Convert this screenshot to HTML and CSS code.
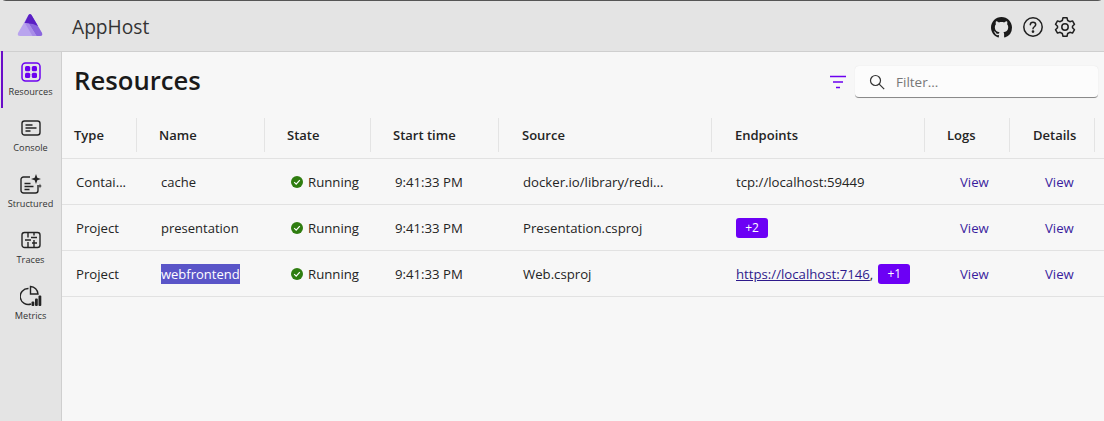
FILE: index.html
```html
<!DOCTYPE html>
<html lang="en">
<head>
    <meta charset="UTF-8">
    <title>AppHost</title>
    <link rel="stylesheet" href="styles.css">
</head>
<body>
    <div class="app">
        <header class="top">
            <div class="logo">
                <svg width="26" height="24" viewBox="0 0 26 24">
                    <path d="M11.500 2 Q13 0 14.500 2 L25 20 Q26 23 23 23 L3 23 Q0 23 1 20 Z" fill="#b9a4ee"/>
                    <path d="M14 1.500 L25 20 Q26 23 23 23 L19.500 23 L12 11 Z" fill="#8a66dd"/>
                    <path d="M8.500 11 L12 11 L19.500 23 L15.500 23 Z" fill="#a88ce8"/>
                    <path d="M11.500 2 Q13 0 14.500 2 L21 13 L16 11 L7.500 10 Z" fill="#5a1fc4"/>
                </svg>
            </div>
            <div class="app-name">AppHost</div>
            <div class="top-icons">
                <svg width="21" height="21" viewBox="0 0 16 16"><path fill="#1a1a1a" d="M8 0C3.580 0 0 3.580 0 8c0 3.540 2.290 6.530 5.470 7.590.4.070.55-.17.55-.38 0-.19-.01-.82-.01-1.490-2.010.37-2.530-.49-2.690-.94-.09-.23-.48-.94-.82-1.130-.28-.15-.68-.52-.01-.53.630-.01 1.080.58 1.230.82.720 1.210 1.870.87 2.330.66.070-.52.280-.87.510-1.070-1.780-.2-3.640-.89-3.640-3.950 0-.87.310-1.590.820-2.150-.08-.2-.36-1.020.08-2.120 0 0 .67-.21 2.200.82.640-.18 1.320-.27 2-.27s1.360.09 2 .27c1.530-1.040 2.200-.82 2.200-.82.440 1.100.160 1.920.08 2.120.51.560.82 1.270.82 2.150 0 3.070-1.870 3.750-3.650 3.950.29.250.54.730.54 1.480 0 1.070-.01 1.930-.01 2.200 0 .21.150.46.550.38A8.010 8.010 0 0 0 16 8c0-4.420-3.580-8-8-8z"/></svg>
                <svg width="22" height="22" viewBox="0 0 22 22" fill="none" stroke="#1f1f1f" stroke-width="1.500"><circle cx="11" cy="11" r="9.200"/><path d="M8.300 8.800c0-1.600 1.200-2.600 2.700-2.600s2.700 1 2.700 2.400c0 2.200-2.700 2.100-2.700 4.200" stroke-linecap="round"/><circle cx="11" cy="15.600" r="0.600" fill="#1f1f1f"/></svg>
                <svg width="22" height="22" viewBox="0 0 22 22" fill="none" stroke="#1f1f1f" stroke-width="1.500" stroke-linejoin="round"><path d="M9 1.800 L13 1.800 L13.700 4.500 L15.900 5.700 L18.500 4.900 L20.500 8.300 L18.500 10.200 L18.500 11.800 L20.500 13.700 L18.500 17.100 L15.900 16.300 L13.700 17.500 L13 20.200 L9 20.200 L8.300 17.500 L6.100 16.300 L3.500 17.100 L1.500 13.700 L3.500 11.800 L3.500 10.200 L1.500 8.300 L3.500 4.900 L6.100 5.700 L8.300 4.500 Z"/><circle cx="11" cy="11" r="3.200"/></svg>
            </div>
        </header>
        <div class="body-wrap">
            <nav class="side">
                <div class="nav-item active">
                    <svg width="20" height="20" viewBox="0 0 20 20"><rect x="1" y="1" width="18" height="18" rx="3.500" fill="none" stroke="#6c00f0" stroke-width="1.500"/><rect x="4" y="4" width="5.200" height="5.200" rx="1.500" fill="#6c00f0"/><rect x="10.800" y="4" width="5.200" height="5.200" rx="1.500" fill="#6c00f0"/><rect x="4" y="10.800" width="5.200" height="5.200" rx="1.500" fill="#6c00f0"/><rect x="10.800" y="10.800" width="5.200" height="5.200" rx="1.500" fill="#6c00f0"/></svg>
                    <span>Resources</span>
                </div>
                <div class="nav-item">
                    <svg width="20" height="20" viewBox="0 0 20 20" fill="none" stroke="#242424" stroke-width="1.400"><rect x="1" y="3" width="18" height="14" rx="2.500"/><path d="M4.500 7h7M4.500 10h11M4.500 13h5"/></svg>
                    <span>Console</span>
                </div>
                <div class="nav-item">
                    <svg width="22" height="20" viewBox="0 0 22 20" fill="none" stroke="#242424" stroke-width="1.400"><path d="M10 3H3.500A2.500 2.500 0 0 0 1 5.500V16.500A2.500 2.500 0 0 0 3.500 19H15.500A2.500 2.500 0 0 0 18 16.500V11"/><path d="M4.500 9.500h6M4.500 12.500h9M4.500 15.500h5"/><path d="M16 0 L17.300 3.700 L21 5 L17.300 6.300 L16 10 L14.700 6.300 L11 5 L14.700 3.700 Z" fill="#242424" stroke="none"/><path d="M20 9.500 L20.600 11.400 L22 12 L20.600 12.600 L20 14.500 L19.400 12.600 L18 12 L19.400 11.400 Z" fill="#242424" stroke="none"/></svg>
                    <span>Structured</span>
                </div>
                <div class="nav-item">
                    <svg width="20" height="20" viewBox="0 0 20 20" fill="none" stroke="#242424" stroke-width="1.400"><rect x="1" y="2.500" width="18" height="15" rx="2.500"/><path d="M7 2.500v5M7 12v5.500M13 2.500v3M13 10v7.500M4 10h6M10 7.500h6M11 13h5"/></svg>
                    <span>Traces</span>
                </div>
                <div class="nav-item">
                    <svg width="22" height="22" viewBox="0 0 22 22" fill="none" stroke="#242424" stroke-width="1.400"><path d="M8.500 3.500A8 8 0 1 0 11 19"/><path d="M10.500 1.500A8 8 0 0 1 18 9H10.500Z"/><rect x="11.500" y="16.500" width="2.800" height="4.500" rx="1" fill="#242424" stroke="none"/><rect x="15" y="13.500" width="2.800" height="7.500" rx="1" fill="#242424" stroke="none"/><rect x="18.500" y="10.500" width="2.800" height="10.500" rx="1" fill="#242424" stroke="none"/></svg>
                    <span>Metrics</span>
                </div>
            </nav>
            <main class="main">
                <div class="title-bar">
                    <h1>Resources</h1>
                    <svg class="filter-icon" width="18" height="14" viewBox="0 0 18 14" fill="none" stroke="#6c00f0" stroke-width="1.500"><path d="M1 1.500h16M4 7h10M7 12.500h4"/></svg>
                    <div class="search">
                        <svg width="16" height="16" viewBox="0 0 16 16" fill="none" stroke="#333" stroke-width="1.200"><circle cx="6.500" cy="6.500" r="5"/><path d="M10.200 10.200l5 5"/></svg>
                        <span>Filter...</span>
                    </div>
                </div>
                <div class="row head">
                    <div class="h-cell">Type</div>
                    <div class="h-cell">Name</div>
                    <div class="h-cell">State</div>
                    <div class="h-cell">Start time</div>
                    <div class="h-cell wide">Source</div>
                    <div class="h-cell wide">Endpoints</div>
                    <div class="h-cell">Logs</div>
                    <div class="h-cell">Details</div>
                </div>
                <div class="row">
                    <div class="cell">Contai...</div>
                    <div class="cell name">cache</div>
                    <div class="cell state"><svg width="12" height="12" viewBox="0 0 12 12"><circle cx="6" cy="6" r="6" fill="#2f7d10"/><path d="M3.200 6.200l2 2 3.600-4" fill="none" stroke="#fff" stroke-width="1.200"/></svg>Running</div>
                    <div class="cell">9:41:33 PM</div>
                    <div class="cell">docker.io/library/redi...</div>
                    <div class="cell">tcp://localhost:59449</div>
                    <div class="cell view"><a>View</a></div>
                    <div class="cell view"><a>View</a></div>
                </div>
                <div class="row">
                    <div class="cell">Project</div>
                    <div class="cell name">presentation</div>
                    <div class="cell state"><svg width="12" height="12" viewBox="0 0 12 12"><circle cx="6" cy="6" r="6" fill="#2f7d10"/><path d="M3.200 6.200l2 2 3.600-4" fill="none" stroke="#fff" stroke-width="1.200"/></svg>Running</div>
                    <div class="cell">9:41:33 PM</div>
                    <div class="cell">Presentation.csproj</div>
                    <div class="cell"><span class="badge">+2</span></div>
                    <div class="cell view"><a>View</a></div>
                    <div class="cell view"><a>View</a></div>
                </div>
                <div class="row">
                    <div class="cell">Project</div>
                    <div class="cell name"><span class="selected">webfrontend</span></div>
                    <div class="cell state"><svg width="12" height="12" viewBox="0 0 12 12"><circle cx="6" cy="6" r="6" fill="#2f7d10"/><path d="M3.200 6.200l2 2 3.600-4" fill="none" stroke="#fff" stroke-width="1.200"/></svg>Running</div>
                    <div class="cell">9:41:33 PM</div>
                    <div class="cell">Web.csproj</div>
                    <div class="cell"><a class="link">https://localhost:7146</a>,<span class="badge comma">+1</span></div>
                    <div class="cell view"><a>View</a></div>
                    <div class="cell view"><a>View</a></div>
                </div>
            </main>
        </div>
    </div>
</body>
</html>
```

FILE: styles.css
```css
* { margin: 0; padding: 0; box-sizing: border-box; }
html, body { height: 100%; overflow: hidden; }
body { background: #e4e4e4; font-family: "Open Sans", "Noto Sans", sans-serif; color: #242424; font-size: 13px; }

.app { height: 100%; display: flex; flex-direction: column; border-top: 1px solid #555; border-radius: 6px 6px 0 0; }

.top { height: 51px; flex: none; display: flex; align-items: center; background: #e4e4e4; border-bottom: 1px solid #cfcfcf; }
.logo { width: 72px; padding-left: 17px; display: flex; padding-bottom: 3px; }
.app-name { font-size: 19.200px; color: #333; }
.top-icons { margin-left: auto; padding: 2px 28px 0 0; display: flex; gap: 10px; align-items: center; }

.body-wrap { flex: 1; display: flex; min-height: 0; }

.side { width: 62px; flex: none; border-right: 1px solid #cfcfcf; }
.nav-item { height: 56px; display: flex; flex-direction: column; align-items: center; justify-content: flex-end; gap: 2px; font-size: 9.200px; color: #333; padding-bottom: 10px; position: relative; }
.nav-item svg { height: 22px; }
.nav-item.active::before { content: ""; position: absolute; left: 1px; top: -1px; bottom: 0; width: 2px; background: #6a0dc8; }

.main { flex: 1; background: #f7f7f7; min-width: 0; }

.title-bar { height: 60px; display: flex; align-items: center; padding: 0 6px 0 12px; }
.title-bar h1 { font-size: 25.700px; font-weight: 600; color: #1a1a1a; margin-bottom: 3px; }
.filter-icon { margin-left: auto; margin-right: 8px; }
.search { width: 243px; height: 32px; background: #fcfcfc; border-radius: 4px; border-bottom: 1px solid #8a8a8a; box-shadow: 0 0 1px #ddd; display: flex; align-items: center; gap: 11px; padding-left: 14px; color: #777; font-size: 13.500px; }

.row { display: grid; grid-template-columns: 75px 128px 106px 128px 213px 213px 85px 94px; height: 46px; border-bottom: 1px solid #e2e2e2; align-items: center; }
.head { height: 47px; }
.h-cell { height: 34px; display: flex; align-items: center; padding-left: 12px; font-weight: 600; font-size: 13px; color: #242424; border-right: 1px solid #e4e4e4; }
.h-cell:nth-child(n+2) { padding-left: 22px; }
.h-cell.wide { padding-left: 23px; }
.h-cell:last-child { margin-right: 9px; padding-left: 23px; }
.cell { padding-left: 14px; font-size: 13.200px; white-space: nowrap; display: flex; align-items: center; }
.cell:nth-child(n+2) { padding-left: 24px; }
.cell.name { font-size: 13px; }
.state { gap: 5px; padding-left: 26px !important; }
.view { color: #3a1d9e; }
.cell.view:nth-child(n+2) { padding-left: 35px; }
.link { color: #2e1a8c; text-decoration: underline; }
.badge { background: #6c00f5; color: #fff; border-radius: 3px; width: 32px; height: 20px; display: flex; align-items: center; justify-content: center; font-size: 12px; }
.comma { margin-left: 5px; }
.selected { background: #5a55c8; color: #fff; height: 20px; display: inline-flex; align-items: center; }
```
